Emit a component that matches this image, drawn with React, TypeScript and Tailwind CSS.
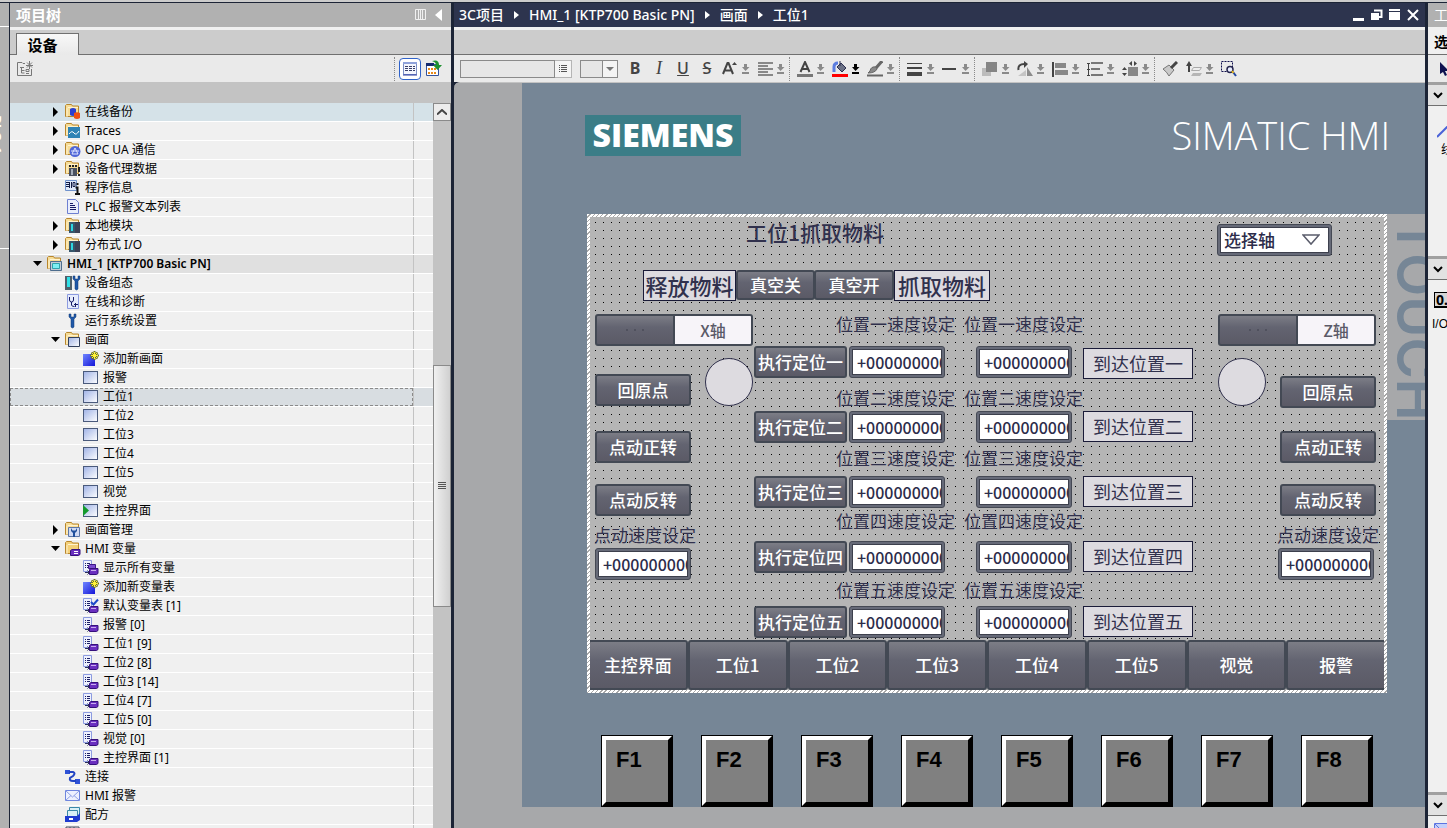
import type { ReactNode } from 'react';

const CJK = "font-['Noto_Sans','Noto_Sans_CJK_SC',sans-serif]";

/* ---------- tree icons ---------- */

function Folder({ children, open }: { children?: ReactNode; open?: boolean }) {
  return (
    <>
      <path d="M.5 12.500V1.500l1-1h5l1 1.500h6v10.500z" fill={open ? '#f3cf78' : '#f6dc96'} stroke="#b8862d" />
      <path d="M2 13V4.500l1-1h10" fill="none" stroke="#fff3cf" />
      {children}
    </>
  );
}

function TagSheet({ check, all }: { check?: boolean; all?: boolean }) {
  return (
    <>
      <path d="M.5.5h8v11h-8z" fill="#eef1fd" stroke="#8c9be0" />
      <path d="M2 3.500h1M4 3.500h3M2 5.500h1M4 5.500h3M2 7.500h1M4 7.500h3" stroke="#1b1f66" />
      <path d="M2 12.500h4M4.500 10.500l2 2-2 2" stroke="#2b2f5a" fill="none" />
      {all && <path d="M5.500 8.500v-3l1-1h6v4z" fill="#7a4bd0" stroke="#3c1686" />}
      <path d="M6.500 14.500v-5l1.500-1h7v5l-1.500 1z" fill="#6a2fbf" stroke="#35107c" />
      <path d="M8 10.500h5" stroke="#c9adf0" />
      {check && <path d="M8 4l2.500 2.500 4.500-5" fill="none" stroke="#1c49c9" strokeWidth="2" />}
    </>
  );
}

function Wrench({ x = 0 }: { x?: number }) {
  return (
    <path
      d={`M${x + 4} 1v3l2 2v8q1.500 2 3 0V6l2-2V1L${x + 9} 1v3H${x + 6}V1z`}
      fill="#1f58a8"
      stroke="#123a75"
      strokeWidth=".5"
    />
  );
}

function TreeIcon({ kind }: { kind: string }) {
  let art: ReactNode = null;
  switch (kind) {
    case 'backup':
      art = (
        <Folder>
          <path d="M5 5q3-2 6 0v6q-3 2-6 0z" fill="#2b3fd0" />
          <path d="M9 9q3-1.500 6 0v5q-3 2-6 0z" fill="#f04e12" />
        </Folder>
      );
      break;
    case 'traces':
      art = (
        <Folder>
          <path d="M3 4h12v11H3z" fill="#2f83b5" />
          <path d="M4 11q3-4 5-1t5-2" fill="none" stroke="#fff" />
        </Folder>
      );
      break;
    case 'opc':
      art = (
        <Folder>
          <circle cx="10" cy="9.500" r="5.500" fill="#5067d8" />
          <path d="M7 12l3-6 3 6zM6 9h8" fill="none" stroke="#dfe5ff" />
        </Folder>
      );
      break;
    case 'proxy':
      art = (
        <Folder>
          <path d="M4 4h2v2H4zM7 4h2v2H7zM10 4h2v2h-2z" fill="#222" />
          <path d="M4 7h8v8H4z" fill="#4a5160" />
          <path d="M6 8h2v6H6z" fill="#a5adba" />
          <path d="M14 6v5M14 13v2" stroke="#222" strokeWidth="2" />
        </Folder>
      );
      break;
    case 'module':
      art = (
        <Folder>
          <path d="M4 4h6v11H4z" fill="#36566b" />
          <path d="M6 6h2v7H6z" fill="#2ed6e0" />
          <path d="M10 4h5v11h-5z" fill="#3b4256" />
        </Folder>
      );
      break;
    case 'hmi':
      art = (
        <Folder>
          <path d="M3.500 5.500h11v9h-11z" fill="#c3cbd6" stroke="#4d6d8d" />
          <path d="M5.500 7.500h7v5h-7z" fill="#7deff4" stroke="#2fa3ad" />
        </Folder>
      );
      break;
    case 'screens':
      art = (
        <Folder>
          <path d="M3.500 5.500h11v9h-11z" fill="url(#scr)" stroke="#33415f" />
        </Folder>
      );
      break;
    case 'manage':
      art = (
        <Folder>
          <path d="M3.500 5.500h11v9h-11z" fill="#cfd9f3" stroke="#5c76a8" />
          <path d="M6 6v3l2 2v4h2v-4l2-2V6l-1.500 2.500h-3z" fill="#1f4f9c" />
        </Folder>
      );
      break;
    case 'tags':
      art = (
        <Folder open>
          <path d="M5.500 14.500v-5l1.500-1h8v5l-1.500 1z" fill="#6a2fbf" stroke="#35107c" />
          <path d="M9 10.500h4M9 12.500h4" stroke="#fff" />
        </Folder>
      );
      break;
    case 'info':
      art = (
        <>
          <path d="M.5.5h11v10H.5z" fill="#dfe9fb" stroke="#6f92cc" />
          <path d="M1 2.500h3M1 4.500h3M1 6.500h3M4.500 2v6M6.500 2v6M8 2.500h2v4H8z" stroke="#111a44" fill="none" />
          <path d="M12.500 3v2M10.500 7.500h2v6M10 14h5" stroke="#111" strokeWidth="2" fill="none" />
        </>
      );
      break;
    case 'list':
      art = (
        <>
          <path d="M2.500.500h8l3 3v11h-11z" fill="#e9eefc" stroke="#6d7fd1" />
          <path d="M5 4.500h3M5 6.500h5M5 8.500h6M5 10.500h6" stroke="#151a66" />
        </>
      );
      break;
    case 'config':
      art = (
        <>
          <path d="M0 1h7v14H0z" fill="#50606b" />
          <path d="M2 2h3v10H2z" fill="#2fe0e6" />
          <Wrench x={4} />
        </>
      );
      break;
    case 'diag':
      art = (
        <>
          <path d="M2.500.500h11v14h-11z" fill="#e6ecfc" stroke="#8c9be0" />
          <path d="M4.500 3v3q0 2 2 2t2-2V3M6.500 8v3q0 1.500 3 1.500M9 10.500h4M10.500 9v4" fill="none" stroke="#151a66" />
        </>
      );
      break;
    case 'wrench':
      art = <Wrench />;
      break;
    case 'new':
      art = (
        <>
          <path d="M0 3h12v12H0z" fill="url(#newBlue)" />
          <path d="M11.500 0v9M7 4.500h9M8.500 1.500l6 6M14.500 1.500l-6 6" stroke="#6d7420" strokeWidth="2" />
          <path d="M11.500 1v7M8 4.500h7M9 2l5 5M14 2l-5 5" stroke="#fff23a" />
        </>
      );
      break;
    case 'screen':
    case 'start':
      art = (
        <>
          <rect x=".5" y="1.500" width="14" height="12" fill="url(#scr)" stroke="#4a5a7c" />
          {kind === 'start' && <path d="M0 2l6 5.500L0 13z" fill="#139a2c" />}
        </>
      );
      break;
    case 'alltags':
      art = <TagSheet all />;
      break;
    case 'deftags':
      art = <TagSheet check />;
      break;
    case 'tagtable':
      art = <TagSheet />;
      break;
    case 'link':
      art = (
        <>
          <path d="M0 1h5v4H0zM10 10h5v5h-5z" fill="#2f52d6" />
          <path d="M4 3h4q3 1 0 4l-3 2q-1 3 3 3h3" fill="none" stroke="#2245c4" strokeWidth="2" />
        </>
      );
      break;
    case 'mail':
      art = (
        <>
          <path d="M.5 2.500h14v10H.5z" fill="#edf1fe" stroke="#6f86de" />
          <path d="M1 3l6.500 6L14 3M1 12l5-4.500M14 12L9 7.500" fill="none" stroke="#8ea0e6" />
        </>
      );
      break;
    case 'recipe':
      art = (
        <>
          <path d="M4.500.500h10v8h-10z" fill="#d9f0f6" stroke="#3a88a8" />
          <path d="M2.500 3.500h10v7h-10z" fill="#d9f0f6" stroke="#3a88a8" />
          <path d="M0 9h12l3-3v7l-3 2H0z" fill="#1e3bd0" />
          <path d="M4 12h4" stroke="#fff" strokeWidth="2" />
        </>
      );
      break;
    case 'more':
      art = <path d="M1 1h13v4H1zM5 1v4M9 1v4" fill="#e5e5ea" stroke="#444a5c" />;
      break;
  }
  return (
    <svg width="16" height="16" viewBox="0 0 16 16" className="shrink-0" aria-hidden="true">
      {art}
    </svg>
  );
}

function Gradients() {
  return (
    <svg width="0" height="0" className="absolute" aria-hidden="true">
      <defs>
        <linearGradient id="scr" x1="0" y1="0" x2="1" y2="1">
          <stop offset="0" stopColor="#9fb2e6" />
          <stop offset="1" stopColor="#ffffff" />
        </linearGradient>
        <linearGradient id="newBlue" x1="0" y1="0" x2="1" y2="1">
          <stop offset="0" stopColor="#6f86ff" />
          <stop offset="1" stopColor="#1515d8" />
        </linearGradient>
      </defs>
    </svg>
  );
}

/* ---------- project tree ---------- */

type Row = { text: string; icon: string; level: 0 | 1 | 2; arrow?: 'open' | 'closed'; state?: 'hot' | 'head' | 'selected' };

const rows: Row[] = [
  { text: '在线备份', icon: 'backup', level: 1, arrow: 'closed', state: 'hot' },
  { text: 'Traces', icon: 'traces', level: 1, arrow: 'closed' },
  { text: 'OPC UA 通信', icon: 'opc', level: 1, arrow: 'closed' },
  { text: '设备代理数据', icon: 'proxy', level: 1, arrow: 'closed' },
  { text: '程序信息', icon: 'info', level: 1 },
  { text: 'PLC 报警文本列表', icon: 'list', level: 1 },
  { text: '本地模块', icon: 'module', level: 1, arrow: 'closed' },
  { text: '分布式 I/O', icon: 'module', level: 1, arrow: 'closed' },
  { text: 'HMI_1 [KTP700 Basic PN]', icon: 'hmi', level: 0, arrow: 'open', state: 'head' },
  { text: '设备组态', icon: 'config', level: 1 },
  { text: '在线和诊断', icon: 'diag', level: 1 },
  { text: '运行系统设置', icon: 'wrench', level: 1 },
  { text: '画面', icon: 'screens', level: 1, arrow: 'open' },
  { text: '添加新画面', icon: 'new', level: 2 },
  { text: '报警', icon: 'screen', level: 2 },
  { text: '工位1', icon: 'screen', level: 2, state: 'selected' },
  { text: '工位2', icon: 'screen', level: 2 },
  { text: '工位3', icon: 'screen', level: 2 },
  { text: '工位4', icon: 'screen', level: 2 },
  { text: '工位5', icon: 'screen', level: 2 },
  { text: '视觉', icon: 'screen', level: 2 },
  { text: '主控界面', icon: 'start', level: 2 },
  { text: '画面管理', icon: 'manage', level: 1, arrow: 'closed' },
  { text: 'HMI 变量', icon: 'tags', level: 1, arrow: 'open' },
  { text: '显示所有变量', icon: 'alltags', level: 2 },
  { text: '添加新变量表', icon: 'new', level: 2 },
  { text: '默认变量表 [1]', icon: 'deftags', level: 2 },
  { text: '报警 [0]', icon: 'tagtable', level: 2 },
  { text: '工位1 [9]', icon: 'tagtable', level: 2 },
  { text: '工位2 [8]', icon: 'tagtable', level: 2 },
  { text: '工位3 [14]', icon: 'tagtable', level: 2 },
  { text: '工位4 [7]', icon: 'tagtable', level: 2 },
  { text: '工位5 [0]', icon: 'tagtable', level: 2 },
  { text: '视觉 [0]', icon: 'tagtable', level: 2 },
  { text: '主控界面 [1]', icon: 'tagtable', level: 2 },
  { text: '连接', icon: 'link', level: 1 },
  { text: 'HMI 报警', icon: 'mail', level: 1 },
  { text: '配方', icon: 'recipe', level: 1 },
  { text: '', icon: 'more', level: 1 },
];

const indent = ['pl-[21px]', 'pl-[39px]', 'pl-[57px]'];

function rowColor(state?: string) {
  if (state === 'hot') return 'bg-[#d5e2e8]';
  if (state === 'head') return 'bg-[#e0e0e0]';
  if (state === 'selected') return 'bg-[#d8dde1]';
  return 'bg-[#f0f0f0]';
}

function TreeRow({ row }: { row: Row }) {
  return (
    <li className="flex h-[19px] shrink-0 border-b border-white">
      <div
        className={`flex min-w-0 flex-1 items-center ${indent[row.level]} ${rowColor(row.state)} ${
          row.state === 'selected' ? 'outline-1 -outline-offset-1 outline-dashed outline-[#8a8a8a]' : ''
        }`}
      >
        <span className="mr-1 flex w-3 shrink-0 justify-center">
          {row.arrow === 'closed' && (
            <svg width="6" height="10" viewBox="0 0 6 10"><path d="M1 0l5 5-5 5z" /></svg>
          )}
          {row.arrow === 'open' && (
            <svg width="10" height="6" viewBox="0 0 10 6"><path d="M1 0h9L5.500 5z" /></svg>
          )}
        </span>
        <TreeIcon kind={row.icon} />
        <span className={`pl-1 text-xs leading-[18px] whitespace-pre text-black ${row.state === 'head' ? 'font-semibold' : ''}`}>
          {row.text}
        </span>
      </div>
      <div className={`w-5 border-l border-[#c3c3c3] ${rowColor(row.state)}`} />
    </li>
  );
}

function ProjectTree() {
  return (
    <aside className="flex w-[441px] shrink-0 flex-col bg-[#c3c3c3]">
      <header className="flex h-6 shrink-0 items-center bg-[#b1b1b1] pr-2 pl-[6px]">
        <h2 className="text-[15px] leading-6 font-bold text-white">项目树</h2>
        <span className="flex-1" />
        <svg width="12" height="12" viewBox="0 0 12 12" className="mr-2" fill="none" stroke="#f0f0f0">
          <path d="M.5.5h10v10H.5zM3.500 0v11M5.500 0v11M7.500 0v11" />
        </svg>
        <svg width="8" height="12" viewBox="0 0 8 12" fill="#fff"><path d="M7 0v12L0 6z" /></svg>
      </header>
      <div className="flex h-7 shrink-0 items-end border-t-[3px] border-[#f0f0f0] bg-[#ccc]">
        <span className="h-full w-[6px] border-b border-[#707070]" />
        <button className="h-[22px] w-[63px] border-x border-t border-[#707070] bg-linear-to-b from-[#f8f8f8] to-[#e9e9e9] pr-[10px] text-[15px] leading-5 font-bold text-black">
          设备
        </button>
        <span className="h-full flex-1 border-b border-[#707070]" />
      </div>
      <div className="flex h-[27px] shrink-0 items-center bg-[#eaeaea] pl-[7px]">
        <button aria-label="添加" className="text-[#777]">
          <svg width="17" height="16" viewBox="0 0 17 16" fill="none" stroke="currentColor">
            <path d="M.5 14.500v-13H5l1 1h2M.5 14.500h14V8M3 6.500h4M4.500 6v6h3M4.500 9.500h3M9 8.500h3v2H9zM9 12.500h3" />
            <path d="M12.500 0v8M9 4.500h7M10 1.500l5 5M15 1.500l-5 5" />
          </svg>
        </button>
        <span className="flex-1" />
        <span className="mr-1 h-6 border-l border-dotted border-[#8a8a8a]" />
        <button aria-label="概览" className="flex size-[22px] items-center justify-center rounded-sm border border-[#2f62c9] bg-white">
          <svg width="14" height="14" viewBox="0 0 14 14" fill="none">
            <path d="M.5.500h13v12H.5z" fill="#f4f6fd" stroke="#7d90c6" />
            <path d="M0 1h14" stroke="#8fa2da" strokeWidth="2" />
            <path d="M2 4.500h10M2 6.500h10M2 8.500h10" stroke="#39406a" strokeDasharray="3 1" />
            <path d="M0 13h14" stroke="#2d3aa0" />
          </svg>
        </button>
        <button aria-label="详细信息" className="mr-2 ml-1">
          <svg width="18" height="17" viewBox="0 0 18 17">
            <path d="M1.500 4.500h12v11h-12z" fill="#fff" stroke="#33529c" />
            <path d="M1 3h8v3H1z" fill="#152a6e" />
            <path d="M3 8h2v2H3zM6 8h2v2H6zM9 8h2v2H9zM3 12h2v2H3zM6 12h2v2H6zM9 12h2v2H9z" fill="#e88a1a" />
            <path d="M7 1q7-2 7 4h3l-4.500 5L8 5h3q0-3-4-4z" fill="#1f9130" />
          </svg>
        </button>
      </div>
      <div className="mt-[21px] flex min-h-0 flex-1">
        <ul className="flex min-w-0 flex-1 flex-col overflow-hidden bg-[#f0f0f0]">
          {rows.map((row, i) => (
            <TreeRow key={i} row={row} />
          ))}
        </ul>
        <div className="flex w-[18px] shrink-0 flex-col">
          <button aria-label="向上滚动" className="mb-[244px] flex h-[18px] shrink-0 items-center justify-center border border-[#8a8a8a] bg-[#ececec]">
            <svg width="10" height="6" viewBox="0 0 10 6" fill="none" stroke="#444" strokeWidth="2"><path d="M0 5.500 5 1l5 4.500" /></svg>
          </button>
          <div className="flex h-[242px] shrink-0 items-center justify-center border border-[#8a8a8a] bg-linear-to-r from-[#f0f0f0] to-[#d0d0d0]">
            <svg width="8" height="8" viewBox="0 0 8 8" stroke="#555"><path d="M0 .5h8M0 2.500h8M0 4.500h8M0 6.500h8" /></svg>
          </div>
        </div>
      </div>
    </aside>
  );
}

/* ---------- toolbar ---------- */

function Drop({ dark }: { dark?: boolean }) {
  return (
    <svg width="8" height="16" viewBox="0 0 8 16" fill={dark ? '#000' : '#8a8a8a'} aria-hidden="true">
      <path d="M2 3h3v3h2.500L3.500 10 0 6h2zM0 11h7v2H0z" />
    </svg>
  );
}

function Tool({ label, dark, plain, children }: { label: string; dark?: boolean; plain?: boolean; children: ReactNode }) {
  return (
    <button aria-label={label} className={`flex shrink-0 items-center gap-1 pl-[3px] ${plain ? 'w-6' : 'w-[35px]'}`}>
      <svg width="16" height="16" viewBox="0 0 16 16" fill="none" stroke="#444" aria-hidden="true">
        {children}
      </svg>
      {!plain && <Drop dark={dark} />}
    </button>
  );
}

function Sep() {
  return <span className="mr-1 h-6 shrink-0 border-l border-dotted border-[#8a8a8a]" />;
}

function Toolbar() {
  return (
    <div className="flex h-[27px] shrink-0 items-center overflow-hidden bg-[#eaeaea] pl-[6px] text-[#444]">
      <input aria-label="字体" className="h-[18px] w-[95px] shrink-0 border border-[#8a8a8a] bg-[#e6e6e6] px-1 text-xs" />
      <button aria-label="选择字体" className="flex h-[18px] w-[17px] shrink-0 items-center justify-center border border-l-0 border-[#b5b5b5] bg-[#f4f4f4]">
        <svg width="9" height="10" viewBox="0 0 9 10" stroke="#555"><path d="M0 1.500h1M2 1.500h6M0 3.500h1M2 3.500h6M0 5.500h1M2 5.500h6M0 7.500h1M2 7.500h6" /></svg>
      </button>
      <div className="ml-2 flex h-[18px] w-[38px] shrink-0 border border-[#8a8a8a] bg-[#e6e6e6]">
        <span className="w-[21px]" />
        <button aria-label="字号" className="flex flex-1 items-center justify-center border-l border-[#8a8a8a] bg-[#f4f4f4]">
          <svg width="8" height="4" viewBox="0 0 8 4" fill="#777"><path d="M0 0h8L4 4z" /></svg>
        </button>
      </div>
      <button className="ml-[5px] w-6 shrink-0 pb-0.5 text-base leading-5 font-bold">B</button>
      <button className="w-6 shrink-0 pb-0.5 font-['Liberation_Serif',serif] text-lg leading-5 italic">I</button>
      <button className="w-6 shrink-0 pb-0.5 text-base leading-5 font-medium underline">U</button>
      <button className="w-6 shrink-0 pb-0.5 text-base leading-5 font-medium line-through">S</button>
      <Tool label="字号增减">
        <path d="M1 13 5.500 2h1L11 13M3 9.500h6" strokeWidth="2" />
        <path d="M10 4l2.500-3L15 4z" fill="#444" stroke="none" />
      </Tool>
      <Tool label="对齐">
        <path d="M1 2h15M1 5h10M1 8h15M1 11h10M1 14h15" stroke="#888" strokeWidth="2" />
      </Tool>
      <Sep />
      <Tool label="文字颜色">
        <path d="M3.500 11 8 1l4.500 10M5 8h6" strokeWidth="2" />
        <path d="M0 14.500h16" stroke="#777" strokeWidth="3" />
      </Tool>
      <Tool label="填充颜色" dark>
        <path d="M2 11V6q0-4 4-4" stroke="#5b7de0" strokeWidth="3" />
        <path d="M5 6l4-4 5 5-4 4z" fill="#6b7186" stroke="#2c3050" />
        <path d="M8 5V0" stroke="#2c3050" />
        <path d="M0 14.500h16" stroke="#f00" strokeWidth="3" />
      </Tool>
      <Tool label="边框颜色">
        <path d="M15 0 9 7" strokeWidth="3" stroke="#666" />
        <path d="M9 6q-5-1-6 4l-2 2q7 0 9-4z" fill="#888" stroke="#666" />
        <path d="M0 14.500h16" stroke="#666" strokeWidth="2" />
      </Tool>
      <Sep />
      <Tool label="线宽">
        <path d="M0 2.500h15" />
        <path d="M0 7h15" strokeWidth="2" />
        <path d="M0 13h15" strokeWidth="4" />
      </Tool>
      <Tool label="线型">
        <path d="M0 8h14" strokeWidth="2" />
      </Tool>
      <Sep />
      <Tool label="层次">
        <path d="M0 7h9v8H0z" fill="#bcbcbc" stroke="none" />
        <path d="M4 1h11v10H4z" fill="#858585" stroke="none" />
      </Tool>
      <Tool label="旋转">
        <path d="M1.500 9q-1-6 6-6" strokeWidth="2" />
        <path d="M7 0l4 3-4 4z" fill="#444" stroke="none" />
        <path d="M10 6v9h6z" fill="#8c8c8c" stroke="none" />
        <path d="M9 9v6H1z" fill="#c4c4c4" stroke="none" />
      </Tool>
      <Tool label="对齐对象">
        <path d="M1 1v15" strokeWidth="2" />
        <path d="M3 2h11v5H3zM3 9h13v5H3z" fill="#888" stroke="none" />
      </Tool>
      <Tool label="分布">
        <path d="M1.500 2v13M0 2.500h3M0 8.500h3M0 14.500h3" />
        <path d="M4 2h12M4 8h9M4 14h12" stroke="#777" strokeWidth="2" />
      </Tool>
      <Tool label="尺寸">
        <path d="M6 6h10v9H6z" fill="#888" stroke="none" />
        <path d="M7 2.500l3-2.500v5zM15 2.500 12 0v5zM2.500 6 0 9h5zM2.500 15 0 12h5z" fill="#444" stroke="none" />
      </Tool>
      <Sep />
      <Tool label="格式刷" plain>
        <path d="M1 8l6-4 5 5-5 6q-2-4-6-7z" fill="#c9c9c9" stroke="#777" />
        <path d="M9 7l6-6" strokeWidth="3" />
      </Tool>
      <Tool label="移动层">
        <path d="M3 11V4" strokeWidth="2" />
        <path d="M0 5l3-5 3 5z" fill="#444" stroke="none" />
        <path d="M7.500 6.500h8l-2 3h-8z" fill="#eee" stroke="#aaa" />
        <path d="M7 12h9l-2 3H5z" fill="#b5b5b5" stroke="none" />
      </Tool>
      <Tool label="缩放" plain>
        <path d="M.5.500h11v10H.5z" stroke="#10104e" strokeDasharray="2 1" />
        <circle cx="9" cy="8.500" r="3" fill="#e9eeff" stroke="#26264e" strokeWidth="1.500" />
        <path d="M12 11l3 4" stroke="#2448a0" strokeWidth="2" />
        <path d="M11 10l1.500 2" stroke="#e0b21a" strokeWidth="2" />
      </Tool>
    </div>
  );
}

/* ---------- HMI screen objects ---------- */

const face = 'rounded-[3px] border-2 border-[#434954] bg-linear-to-b from-[#7c7d86] via-[#636471] via-40% to-[#5b5a66]';

function HmiButton({ text, at }: { text: string; at: string }) {
  return (
    <button className={`absolute flex items-center justify-center text-[17px] leading-5 font-medium whitespace-nowrap text-white ${face} ${at}`}>
      {text}
    </button>
  );
}

function NumberField({ label, at }: { label: string; at: string }) {
  return (
    <div className={`absolute h-8 w-24 rounded-[3px] border border-[#454954] bg-[#666a78] p-0.5 ${at}`}>
      <input
        aria-label={label}
        defaultValue="+0000000000"
        className="block h-full w-full border border-[#3d404d] bg-white pl-1 text-base leading-5 font-medium text-[#2c2c4a]"
      />
    </div>
  );
}

function Label({ text, at }: { text: string; at: string }) {
  return (
    <span className={`absolute text-[17px] leading-5 whitespace-nowrap text-[#31314d] ${at}`}>{text}</span>
  );
}

function TextBox({ text, at }: { text: string; at: string }) {
  return (
    <div className={`absolute flex h-[31px] items-center justify-center border border-[#1a1b38] bg-[#dddbe0] whitespace-nowrap text-[#31314d] ${at}`}>
      {text}
    </div>
  );
}

function AxisSwitch({ text, at }: { text: string; at: string }) {
  return (
    <button className={`absolute flex h-8 w-[158px] overflow-hidden ${face} ${at}`}>
      <span className="flex h-full flex-1 items-center justify-center gap-[6px] border-r-2 border-[#434954]">
        <i className="size-0.5 bg-[#50515e]" />
        <i className="size-0.5 bg-[#50515e]" />
        <i className="size-0.5 bg-[#50515e]" />
      </span>
      <span className="flex h-full flex-1 items-center justify-center bg-[#f7f4f9] text-base leading-5 font-medium text-[#5b5a68]">
        {text}
      </span>
    </button>
  );
}

const positions = [
  { n: '一', label: 'top-[97px]', row: 'top-[129px]', box: 'top-[131px]' },
  { n: '二', label: 'top-[171px]', row: 'top-[194px]', box: 'top-[194px]' },
  { n: '三', label: 'top-[231px]', row: 'top-[259px]', box: 'top-[259px]' },
  { n: '四', label: 'top-[294px]', row: 'top-[324px]', box: 'top-[324px]' },
  { n: '五', label: 'top-[363px]', row: 'top-[389px]', box: 'top-[389px]' },
];

const screens = ['主控界面', '工位1', '工位2', '工位3', '工位4', '工位5', '视觉', '报警'];
const keys = ['F1', 'F2', 'F3', 'F4', 'F5', 'F6', 'F7', 'F8'];

function HmiScreen() {
  return (
    <div className="h-[479px] w-[800px] shrink-0 bg-[repeating-linear-gradient(135deg,#ffffff_0_2px,#a8a8a8_2px_3px)] p-[3px]">
      <div className="relative flex h-full flex-col justify-end overflow-hidden bg-[#b5b5b5] bg-[conic-gradient(from_270deg_at_1px_1px,#000_90deg,transparent_0)] bg-[length:8px_8px] bg-[position:5px_5px] font-['Noto_Sans_CJK_SC',sans-serif]">
        <h1 className="absolute top-[3px] left-[156px] text-[21px] leading-6 font-medium whitespace-nowrap text-[#31314d]">工位1抓取物料</h1>
        <div className="absolute top-[7px] left-[627px] h-8 w-[115px] rounded-[3px] border border-[#454954] bg-[#666a78] p-0.5">
          <select aria-label="选择轴" className="block h-full w-full appearance-none border border-[#3d404d] bg-white pl-[3px] text-[17px] leading-5 font-medium text-[#2c2c4a]">
            <option>选择轴</option>
          </select>
          <svg width="18" height="12" viewBox="0 0 18 12" className="pointer-events-none absolute top-[9px] right-[11px]" fill="none" stroke="#5b5d6c" strokeWidth="1.500">
            <path d="M1 1h16l-8 9z" />
          </svg>
        </div>

        <TextBox text="释放物料" at="top-[53px] left-[53px] w-[93px] text-[22px] font-medium" />
        <HmiButton text="真空关" at="top-[53px] left-[146px] h-[30px] w-[79px]" />
        <HmiButton text="真空开" at="top-[53px] left-[224px] h-[30px] w-20" />
        <TextBox text="抓取物料" at="top-[53px] left-[304px] w-24 text-[22px] font-medium" />

        <AxisSwitch text="X轴" at="top-[97px] left-[5px]" />
        <AxisSwitch text="Z轴" at="top-[97px] left-[628px]" />
        <span className="absolute top-[141px] left-[115px] size-12 rounded-full border border-[#31314d] bg-[#dddbe0]" />
        <span className="absolute top-[141px] left-[628px] size-12 rounded-full border border-[#31314d] bg-[#dddbe0]" />

        <HmiButton text="回原点" at="top-[157px] left-[5px] h-8 w-24" />
        <HmiButton text="点动正转" at="top-[214px] left-[5px] h-8 w-24" />
        <HmiButton text="点动反转" at="top-[267px] left-[5px] h-8 w-24" />
        <Label text="点动速度设定" at="top-[308px] left-[4px]" />
        <NumberField label="X轴点动速度" at="top-[331px] left-[5px]" />

        <HmiButton text="回原点" at="top-[159px] left-[690px] h-8 w-24" />
        <HmiButton text="点动正转" at="top-[214px] left-[690px] h-8 w-24" />
        <HmiButton text="点动反转" at="top-[267px] left-[690px] h-8 w-24" />
        <Label text="点动速度设定" at="top-[308px] left-[687px]" />
        <NumberField label="Z轴点动速度" at="top-[331px] left-[688px]" />

        {positions.map((p) => (
          <div key={p.n} className="contents">
            <Label text={`位置${p.n}速度设定`} at={`left-[246px] ${p.label}`} />
            <Label text={`位置${p.n}速度设定`} at={`left-[374px] ${p.label}`} />
            <HmiButton text={`执行定位${p.n}`} at={`left-[164px] h-8 w-[93px] ${p.row}`} />
            <NumberField label={`X轴位置${p.n}`} at={`left-[259px] ${p.row}`} />
            <NumberField label={`Z轴位置${p.n}`} at={`left-[386px] ${p.row}`} />
            <TextBox text={`到达位置${p.n}`} at={`left-[493px] w-[110px] text-[18px] ${p.box}`} />
          </div>
        ))}

        <nav className="-mx-0.5 flex h-[50px]">
          {screens.map((s) => (
            <button key={s} className={`flex-1 text-[17px] leading-5 font-medium whitespace-nowrap text-white ${face}`}>
              {s}
            </button>
          ))}
        </nav>
      </div>
    </div>
  );
}

/* ---------- editor ---------- */

function Crumb({ text }: { text: string }) {
  return <a href="#" className="text-sm leading-6 font-medium whitespace-nowrap text-white">{text}</a>;
}

function CrumbArrow() {
  return <svg width="5" height="8" viewBox="0 0 5 8" fill="#fff" className="mx-[10px] shrink-0"><path d="M0 0l5 4-5 4z" /></svg>;
}

function Editor() {
  return (
    <main className="flex min-w-0 flex-1 flex-col">
      <header className="flex h-6 shrink-0 items-center bg-[#2d344e] pr-[6px] pl-[5px]">
        <Crumb text="3C项目" />
        <CrumbArrow />
        <Crumb text="HMI_1 [KTP700 Basic PN]" />
        <CrumbArrow />
        <Crumb text="画面" />
        <CrumbArrow />
        <Crumb text="工位1" />
        <span className="flex-1" />
        <div className="flex gap-[6px]">
          <button aria-label="最小化">
            <svg width="12" height="12" viewBox="0 0 12 12" fill="#fff"><path d="M0 9h11v3H0z" /></svg>
          </button>
          <button aria-label="还原">
            <svg width="12" height="12" viewBox="0 0 12 12" fill="none" stroke="#fff">
              <path d="M3 1.500h7.500V8H8" strokeWidth="2" />
              <path d="M0 4h8v7H0z" fill="#fff" stroke="none" />
            </svg>
          </button>
          <button aria-label="最大化">
            <svg width="12" height="12" viewBox="0 0 12 12" fill="#fff"><path d="M0 0h11v2H0zM0 3h11v8H0z" /></svg>
          </button>
          <button aria-label="关闭">
            <svg width="12" height="12" viewBox="0 0 12 12" stroke="#fff" strokeWidth="2"><path d="M1 1l10 10M11 1 1 11" /></svg>
          </button>
        </div>
      </header>
      <div className="h-7 shrink-0 border-t-[3px] border-b border-t-[#f0f0f0] border-b-[#707070] bg-[#ccc]" />
      <Toolbar />
      <div className="flex min-h-0 flex-1 overflow-hidden rounded-tl-md border-t border-[#c3c3c3] bg-[#a7a8aa] pb-[21px] pl-[68px]">
        <div className="flex min-w-0 flex-1 flex-col bg-[#768696]">
          <div className="flex h-[131px] w-[868px] shrink-0 items-start justify-between pt-8 pl-[63px]">
            <div className="flex h-[41px] w-[156px] items-center justify-center bg-[#3b7d87] pb-0.5 font-['Open_Sans',sans-serif] text-[32px] leading-10 font-extrabold text-white">
              SIEMENS
            </div>
            <div className="font-['Open_Sans',sans-serif] text-[38px] leading-10 font-light whitespace-nowrap text-white">
              SIMATIC HMI
            </div>
          </div>
          <div className="flex shrink-0 pl-[65px]">
            <HmiScreen />
            <div className="flex h-[206px] min-w-0 flex-1 overflow-hidden bg-[#a7a8aa] pt-1 pl-0.5">
              <span className="shrink-0 font-['Inter',sans-serif] text-[56px] leading-[56px] font-semibold text-[#768696] [writing-mode:vertical-rl]">
                TOUCH
              </span>
            </div>
          </div>
          <div className="mt-[42px] flex shrink-0 gap-7 pl-[79px]">
            {keys.map((k) => (
              <button key={k} className="h-[72px] w-[72px] shrink-0 border border-black">
                <span className="flex h-full w-full items-start border-4 border-t-white border-r-black border-b-black border-l-white bg-[#808080] pt-2 pl-[10px] font-['Liberation_Sans',sans-serif] text-[22px] leading-6 font-bold text-black">
                  {k}
                </span>
              </button>
            ))}
          </div>
        </div>
      </div>
    </main>
  );
}

/* ---------- side panels ---------- */

function PaletteBar({ label }: { label: string }) {
  return (
    <button aria-label={label} className="flex h-6 w-full shrink-0 items-center border-t-[3px] border-b border-t-[#a0a0a0] border-b-[#707070] bg-[#e2e2e2] pl-[5px]">
      <svg width="10" height="7" viewBox="0 0 10 7" fill="none" stroke="#000" strokeWidth="2"><path d="M1 1l4 4 4-4" /></svg>
    </button>
  );
}

function Toolbox() {
  return (
    <aside className="flex w-[19px] shrink-0 flex-col overflow-hidden bg-[#f0f0f0]">
      <div className="h-6 shrink-0 bg-[#b1b1b1] pl-[6px] text-sm leading-6 whitespace-nowrap text-white">工具箱</div>
      <div className="h-7 shrink-0 border-t-[3px] border-b border-t-[#f0f0f0] border-b-[#707070] pl-[6px] text-sm leading-6 font-bold whitespace-nowrap text-black">选项</div>
      <div className="flex h-[27px] shrink-0 items-center bg-[#eaeaea] pl-3">
        <svg width="10" height="14" viewBox="0 0 10 14" className="shrink-0" fill="#0f1250"><path d="M0 0l9 9H5l2 4-2 1-2-4-3 2z" /></svg>
      </div>
      <PaletteBar label="基本对象" />
      <div className="h-[150px] shrink-0 pt-5 pl-[9px]">
        <svg width="14" height="12" viewBox="0 0 14 12" stroke="#4a62d8" strokeWidth="2"><path d="M0 11 11 0" /></svg>
        <p className="pt-1 pl-1 text-xs leading-4 whitespace-nowrap text-black">线</p>
      </div>
      <PaletteBar label="元素" />
      <div className="h-[512px] shrink-0 pt-3 pl-1">
        <span className="ml-[2px] block h-4 w-7 border border-b-2 border-black bg-[#d5d5d5] pl-px text-sm leading-[14px] font-bold text-black">0.12</span>
        <p className="pt-2 font-['Liberation_Sans',sans-serif] text-xs leading-4 whitespace-nowrap text-black">I/O 域</p>
      </div>
      <PaletteBar label="控件" />
      <svg width="14" height="10" viewBox="0 0 14 10" className="mt-[7px] ml-[6px] shrink-0"><path d="M.5.5h14v10H.5zM1 1l8 8" fill="#c3d0fa" stroke="#5b74e0" /></svg>
    </aside>
  );
}

export default function App() {
  return (
    <div className={`flex h-screen flex-col overflow-hidden bg-[#1c2436] ${CJK}`}>
      <Gradients />
      <div className="mb-px h-0.5 shrink-0 bg-[#ccc]" />
      <div className="flex min-h-0 flex-1">
        <div className="mr-px flex w-[9px] shrink-0 flex-col overflow-hidden bg-[#b1b1b1]">
          <span className="h-6 border-b border-white" />
          <span className="flex h-[222px] shrink-0 justify-end border-b border-white pt-[88px] pr-1.5 text-sm leading-[14px] font-bold whitespace-nowrap text-white">
            <span className="[writing-mode:vertical-rl]">PLC_1</span>
          </span>
        </div>
        <ProjectTree />
        <span className="w-[3px] shrink-0" />
        <Editor />
        <span className="w-[3px] shrink-0" />
        <Toolbox />
      </div>
    </div>
  );
}
